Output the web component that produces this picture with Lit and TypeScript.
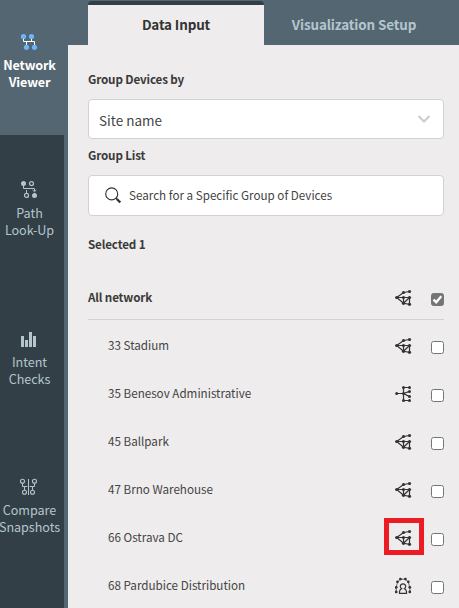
import { LitElement, html, css, svg, nothing } from "lit";
import { customElement, property } from "lit/decorators.js";

type Topology = "mesh" | "tree" | "ring";

interface Group {
  name: string;
  icon: Topology;
  marked?: boolean;
}

const groups: Group[] = [
  { name: "33 Stadium", icon: "mesh" },
  { name: "35 Benesov Administrative", icon: "tree" },
  { name: "45 Ballpark", icon: "mesh" },
  { name: "47 Brno Warehouse", icon: "mesh" },
  { name: "66 Ostrava DC", icon: "mesh", marked: true },
  { name: "68 Pardubice Distribution", icon: "ring" },
];

const dots = (points: number[][], r: number) =>
  points.map(([x, y]) => svg`<circle cx=${x} cy=${y} r=${r}></circle>`);

const topologies = {
  mesh: svg`
    <path d="M14.5 2.5L8.5 3.5L1.7 8.5H14.5V15.3L8.5 14.3L1.7 8.5M8.5 8.5V14.3L14.5 8.5" fill="none" stroke="#333" stroke-width="1.2"></path>
    ${dots([[14.5, 2.5], [8.5, 3.5], [1.7, 8.5], [8.5, 8.5], [14.5, 8.5], [8.5, 14.3], [14.5, 15.3]], 1.6)}`,
  tree: svg`
    <path d="M14.5 2.5H8.5V15.5H14.5M1.7 8.5H8.5L14.5 6.4M8.5 8.5L14.5 11.6" fill="none" stroke="#333" stroke-width="1.2"></path>
    ${dots([[14.5, 2.5], [8.5, 2.5], [1.7, 8.5], [8.5, 8.5], [14.5, 6.4], [14.5, 11.6], [8.5, 15.5], [14.5, 15.5]], 1.5)}`,
  ring: svg`
    <path d="M1.2 14.6L1.2 10.4L2.6 5L5.4 2.2H10.4L13.2 5L14.9 10.4V14.6" fill="none" stroke="#333" stroke-width="0.7"></path>
    <path d="M4.5 16.4V14.6Q4.7 12.6 6.6 11.8A2.7 2.7 0 1 1 9.4 11.8Q11.3 12.6 11.5 14.6V16.4Z" fill="none" stroke="#333" stroke-width="1.2"></path>
    ${dots([[1.2, 14.9], [1.2, 10.3], [2.5, 4.8], [5.4, 2.1], [10.4, 2.1], [13.3, 4.8], [14.8, 10.3], [14.8, 14.9]], 1.4)}`,
};

const navIcons = {
  viewer: svg`
    <path d="M2.5 4V8.5H13.5V14M10.5 4V8.5M5.5 8.5V14" fill="none" stroke="#fff"></path>
    <g fill="#6bb5ff">${dots([[2.5, 3.5], [10.5, 3.5], [5.5, 14.3], [13.5, 14.3]], 2.6)}</g>`,
  path: svg`
    <path d="M2.5 3V7.5H13.5V10M5.5 12V9M11.6 9L13.5 10.8L15.4 9" fill="none" stroke="#b4c5cd"></path>
    <g fill="#b4c5cd">${dots([[2.5, 2.6], [13.5, 14.4]], 2.5)}</g>
    <g fill="#333f46" stroke="#b4c5cd" stroke-width="1.2">${dots([[10.5, 2.6], [5.5, 14.4]], 2)}</g>`,
  checks: svg`<path d="M0 7H3V18H0ZM4 11H7V18H4ZM8 3H11V18H8ZM12 7H15V18H12Z" fill="#b4c5cd"></path>`,
  compare: svg`
    <path d="M7.5 2V18M1.5 5.5V9.5H3.5V13.5M3.5 9.5H6.3M13.5 5.5V9.5H11.5V13.5M11.5 9.5H8.7" fill="none" stroke="#b4c5cd"></path>
    <g fill="#333f46" stroke="#b4c5cd" stroke-width="1.1">${dots([[1.5, 4.3], [13.5, 4.3], [3.5, 15.3], [11.5, 15.3]], 2)}</g>`,
};

@customElement("nav-item")
export class NavItem extends LitElement {
  @property() icon: keyof typeof navIcons = "viewer";
  @property({ type: Array }) lines: string[] = [];
  static styles = css`
    :host {
      display: flex;
      flex-direction: column;
      align-items: center;
      box-sizing: border-box;
      flex: none;
      width: 58px;
      height: 148px;
      padding-top: 46px;
      color: #b4c5cd;
    }
    :host([active]) {
      width: 64px;
      height: 135px;
      padding: 33px 6px 0 0;
      background: #536671;
      color: #fff;
      font-weight: 700;
    }
    svg { display: block; overflow: visible; }
    .label { margin: 5px 0 0 1px; font-size: 12.6px; line-height: 17px; letter-spacing: -0.05px; text-align: center; white-space: nowrap; }
    :host([active]) .label { letter-spacing: -0.15px; }
    :host([low]) .label { margin-top: 6px; }
    .line { display: block; }
  `;
  render() {
    return html`<svg width="16" height="18">${navIcons[this.icon]}</svg>
      <div class="label">${this.lines.map((l) => html`<span class="line">${l}</span>`)}</div>`;
  }
}

@customElement("group-row")
export class GroupRow extends LitElement {
  @property() name = "";
  @property() icon: Topology = "mesh";
  @property({ type: Boolean }) checked = false;
  @property({ type: Boolean }) marked = false;
  static styles = css`
    :host {
      display: flex;
      align-items: center;
      box-sizing: border-box;
      height: 48px;
      padding-left: 20px;
      font-size: 11.65px;
      color: #444;
    }
    :host([head]) {
      height: 44px;
      padding-left: 0;
      border-bottom: 1px solid #d2d1d1;
      font-weight: 700;
      letter-spacing: -0.15px;
      color: #3a3a3a;
    }
    .name { flex: 1; white-space: nowrap; line-height: 18px; padding-bottom: 2px; }
    .topology { position: relative; width: 17px; height: 18px; margin-right: 19px; }
    svg { display: block; fill: #333; }
    .mark { position: absolute; left: -11px; top: -11px; width: 30px; height: 27px; border: 5px solid #ec1c24; }
    .box {
      box-sizing: border-box;
      width: 13px;
      height: 13px;
      margin-top: 3px;
      border: 1px solid #767676;
      border-radius: 2.5px;
      background: #fff;
    }
    .box.on { background: #757575; }
  `;
  render() {
    return html`<span class="name">${this.name}</span>
      <span class="topology">
        <svg width="17" height="18">${topologies[this.icon]}</svg>
        ${this.marked ? html`<span class="mark"></span>` : nothing}
      </span>
      <span class="box ${this.checked ? "on" : ""}">
        ${this.checked
          ? html`<svg width="11" height="11"><path d="M1.5 5.6L4.2 8.2L9.3 2.2" fill="none" stroke="#fff" stroke-width="2.3"></path></svg>`
          : nothing}
      </span>`;
  }
}

@customElement("app-root")
export class AppRoot extends LitElement {
  static styles = css`
    :host {
      display: flex;
      height: 608px;
      overflow: hidden;
      background: #536671;
      font-family: "Noto Sans CJK JP", "Noto Sans", sans-serif;
      color: #3a3a3a;
    }
    .nav { display: flex; flex-direction: column; width: 64px; margin-right: 4px; background: #333f46; }
    .main { flex: 1; display: flex; flex-direction: column; min-width: 0; background: #eeecec; }
    .tabs { display: flex; flex: none; height: 45px; padding-left: 20px; background: #536671; }
    .tab { box-sizing: border-box; height: 44px; margin-top: 1px; text-align: center; font-size: 13.45px; font-weight: 700; letter-spacing: -0.13px; line-height: 20px; white-space: nowrap; }
    .tab.on { width: 176px; padding-top: 9px; border-top: 4px solid #333f46; border-radius: 4px 4px 0 0; background: #eeecec; color: #333; }
    .tab.off { width: 180px; padding-top: 13px; color: #b4c5cd; }
    .form { display: flex; flex-direction: column; padding: 24px 15px 0 20px; }
    .title { font-size: 11.65px; font-weight: 700; letter-spacing: -0.15px; line-height: 20px; height: 20px; white-space: nowrap; }
    .field { display: flex; align-items: center; box-sizing: border-box; border: 1px solid #d2d1d1; border-radius: 4px; background: #fff; color: #444; white-space: nowrap; }
    .select { height: 40px; margin: 10px 0 6px; padding: 0 12px 0 10px; justify-content: space-between; font-size: 13.5px; }
    .select span { padding-top: 1px; }
    .search { height: 41px; margin: 10px 0 18px; padding-left: 16px; gap: 8px; font-size: 11.65px; }
    .search span { padding-bottom: 2px; }
    svg { display: block; }
    .list { display: flex; flex-direction: column; margin-top: 22px; }
    .rows { margin-top: 2px; }
  `;
  render() {
    return html`
      <nav class="nav">
        <nav-item active icon="viewer" .lines=${["Network", "Viewer"]}></nav-item>
        <nav-item icon="path" .lines=${["Path", "Look-Up"]}></nav-item>
        <nav-item low icon="checks" .lines=${["Intent", "Checks"]}></nav-item>
        <nav-item low icon="compare" .lines=${["Compare", "Snapshots"]}></nav-item>
      </nav>
      <main class="main">
        <div class="tabs">
          <div class="tab on">Data Input</div>
          <div class="tab off">Visualization Setup</div>
        </div>
        <div class="form">
          <div class="title">Group Devices by</div>
          <div class="field select">
            <span>Site name</span>
            <svg width="14" height="10"><path d="M1.5 2L7 7.5L12.5 2" fill="none" stroke="#ccc" stroke-width="2"></path></svg>
          </div>
          <div class="title">Group List</div>
          <div class="field search">
            <svg width="16" height="17">
              <circle cx="6.7" cy="6.9" r="6" fill="none" stroke="#333" stroke-width="1.1"></circle>
              <path d="M10.8 11L12.2 12.4" stroke="#333" stroke-width="1.2"></path>
              <path d="M11.8 12L15.3 15.5" stroke="#333" stroke-width="2.4"></path>
            </svg>
            <span>Search for a Specific Group of Devices</span>
          </div>
          <div class="title">Selected 1</div>
          <div class="list">
            <group-row head checked name="All network"></group-row>
            <div class="rows">
              ${groups.map((g) => html`<group-row .name=${g.name} .icon=${g.icon} .marked=${!!g.marked}></group-row>`)}
            </div>
          </div>
        </div>
      </main>`;
  }
}
